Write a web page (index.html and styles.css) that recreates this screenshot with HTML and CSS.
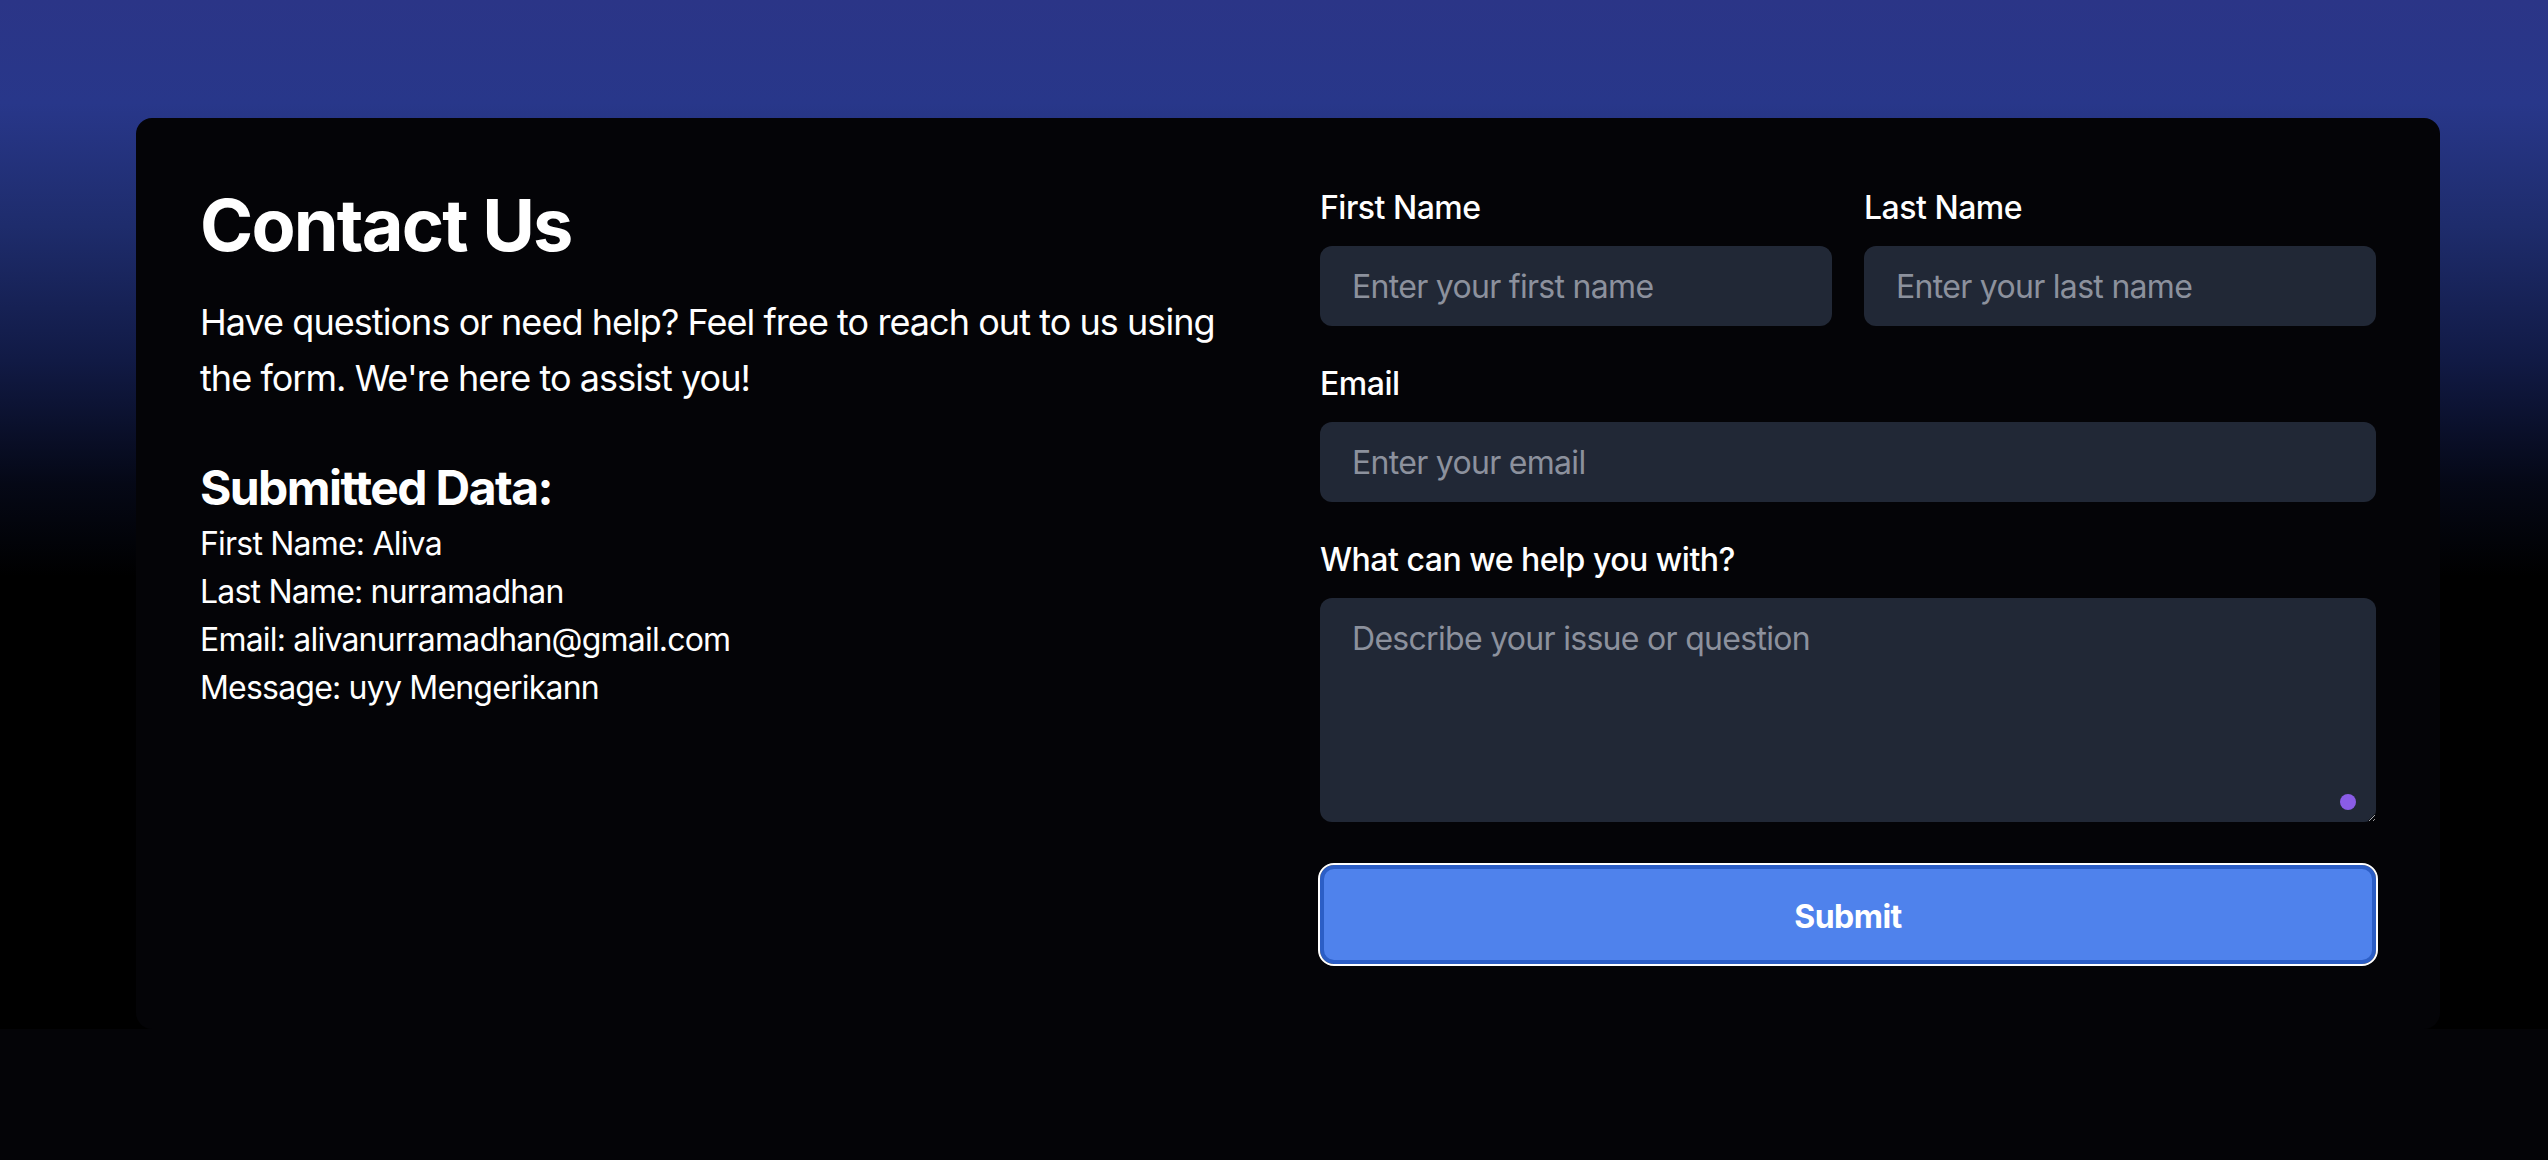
FILE: index.html
```html
<!DOCTYPE html>
<html lang="en">
<head>
<meta charset="utf-8">
<title>Contact Us</title>
<link rel="stylesheet" href="styles.css">
</head>
<body>
<section class="hero">
  <div class="card">
    <div class="info">
      <h1 class="title">Contact Us</h1>
      <p class="intro">Have questions or need help? Feel free to reach out to us using the form. We're here to assist you!</p>
      <h2 class="subtitle">Submitted Data:</h2>
      <div class="data">
        <p>First Name: Aliva</p>
        <p>Last Name: nurramadhan</p>
        <p>Email: alivanurramadhan@gmail.com</p>
        <p>Message: uyy Mengerikann</p>
      </div>
    </div>
    <form class="form">
      <div class="row">
        <div class="field">
          <label class="label" for="first">First Name</label>
          <input class="input" id="first" type="text" placeholder="Enter your first name">
        </div>
        <div class="field">
          <label class="label" for="last">Last Name</label>
          <input class="input" id="last" type="text" placeholder="Enter your last name">
        </div>
      </div>
      <div class="field">
        <label class="label" for="email">Email</label>
        <input class="input" id="email" type="email" placeholder="Enter your email">
      </div>
      <div class="field">
        <label class="label" for="msg">What can we help you with?</label>
        <div class="area-wrap">
          <textarea class="textarea" id="msg" rows="4" placeholder="Describe your issue or question"></textarea>
          <span class="dot"></span>
        </div>
      </div>
      <button class="submit" type="button">Submit</button>
    </form>
  </div>
</section>
</body>
</html>
```
FILE: styles.css
```css
html, body {
  margin: 0;
  padding: 0;
}
body {
  background: #040407;
  font-family: Inter, "Noto Sans", "Liberation Sans", sans-serif;
  color: #ffffff;
  min-height: 1160px;
}
.hero {
  background: linear-gradient(180deg, #2b3587 0%, #28378a 10%, #1e2c6c 22%, #111a45 35%, #050816 47%, #000000 56%, #000000 100%);
  padding: 118px 108px 0 136px;
}
.card {
  box-sizing: border-box;
  width: 2304px;
  background: #040407;
  border-radius: 16px;
  padding: 67px 64px 65px;
  display: grid;
  grid-template-columns: 1fr 1fr;
  gap: 64px;
}
.title {
  margin: 0;
  font-size: 72px;
  line-height: 80px;
  font-weight: 700;
  letter-spacing: -1.8px;
}
.intro {
  margin: 29px 0 0;
  font-size: 36px;
  line-height: 56px;
  letter-spacing: -0.95px;
}
.subtitle {
  margin: 50px 0 0;
  font-size: 48px;
  line-height: 64px;
  font-weight: 700;
  letter-spacing: -1.6px;
}
.data p {
  margin: 0;
  font-size: 32px;
  line-height: 48px;
  letter-spacing: -0.8px;
}
.form {
  display: flex;
  flex-direction: column;
  gap: 32px;
  margin-top: -3px;
}
.row {
  display: grid;
  grid-template-columns: 1fr 1fr;
  gap: 32px;
}
.field {
  display: flex;
  flex-direction: column;
}
.label {
  font-size: 32px;
  line-height: 48px;
  font-weight: 500;
  margin-bottom: 16px;
  letter-spacing: -0.5px;
  padding-top: 2px;
  margin-top: -2px;
  position: relative;
  top: 2px;
}
.input,
.textarea {
  box-sizing: border-box;
  width: 100%;
  border: none;
  outline: none;
  background: #212836;
  color: #ffffff;
  border-radius: 12px;
  font-family: inherit;
  font-size: 32px;
  line-height: 48px;
  letter-spacing: -0.7px;
}
.input {
  height: 80px;
  padding: 16px 32px;
}
.textarea {
  display: block;
  height: 224px;
  padding: 17px 32px 15px;
  resize: vertical;
}
.input::placeholder,
.textarea::placeholder {
  color: #8c919d;
}
.area-wrap {
  position: relative;
}
.dot {
  position: absolute;
  right: 20px;
  bottom: 12px;
  width: 16px;
  height: 16px;
  border-radius: 50%;
  background: #8a5ce6;
}
.submit {
  box-sizing: border-box;
  margin-top: 11px;
  height: 99px;
  width: 100%;
  background: #4f82ec;
  border: 4px solid #2c5ec6;
  border-radius: 14px;
  outline: 2px solid #ffffff;
  outline-offset: 0;
  color: #ffffff;
  font-family: inherit;
  font-size: 32px;
  font-weight: 700;
  letter-spacing: -0.5px;
  padding-top: 4px;
}
```
